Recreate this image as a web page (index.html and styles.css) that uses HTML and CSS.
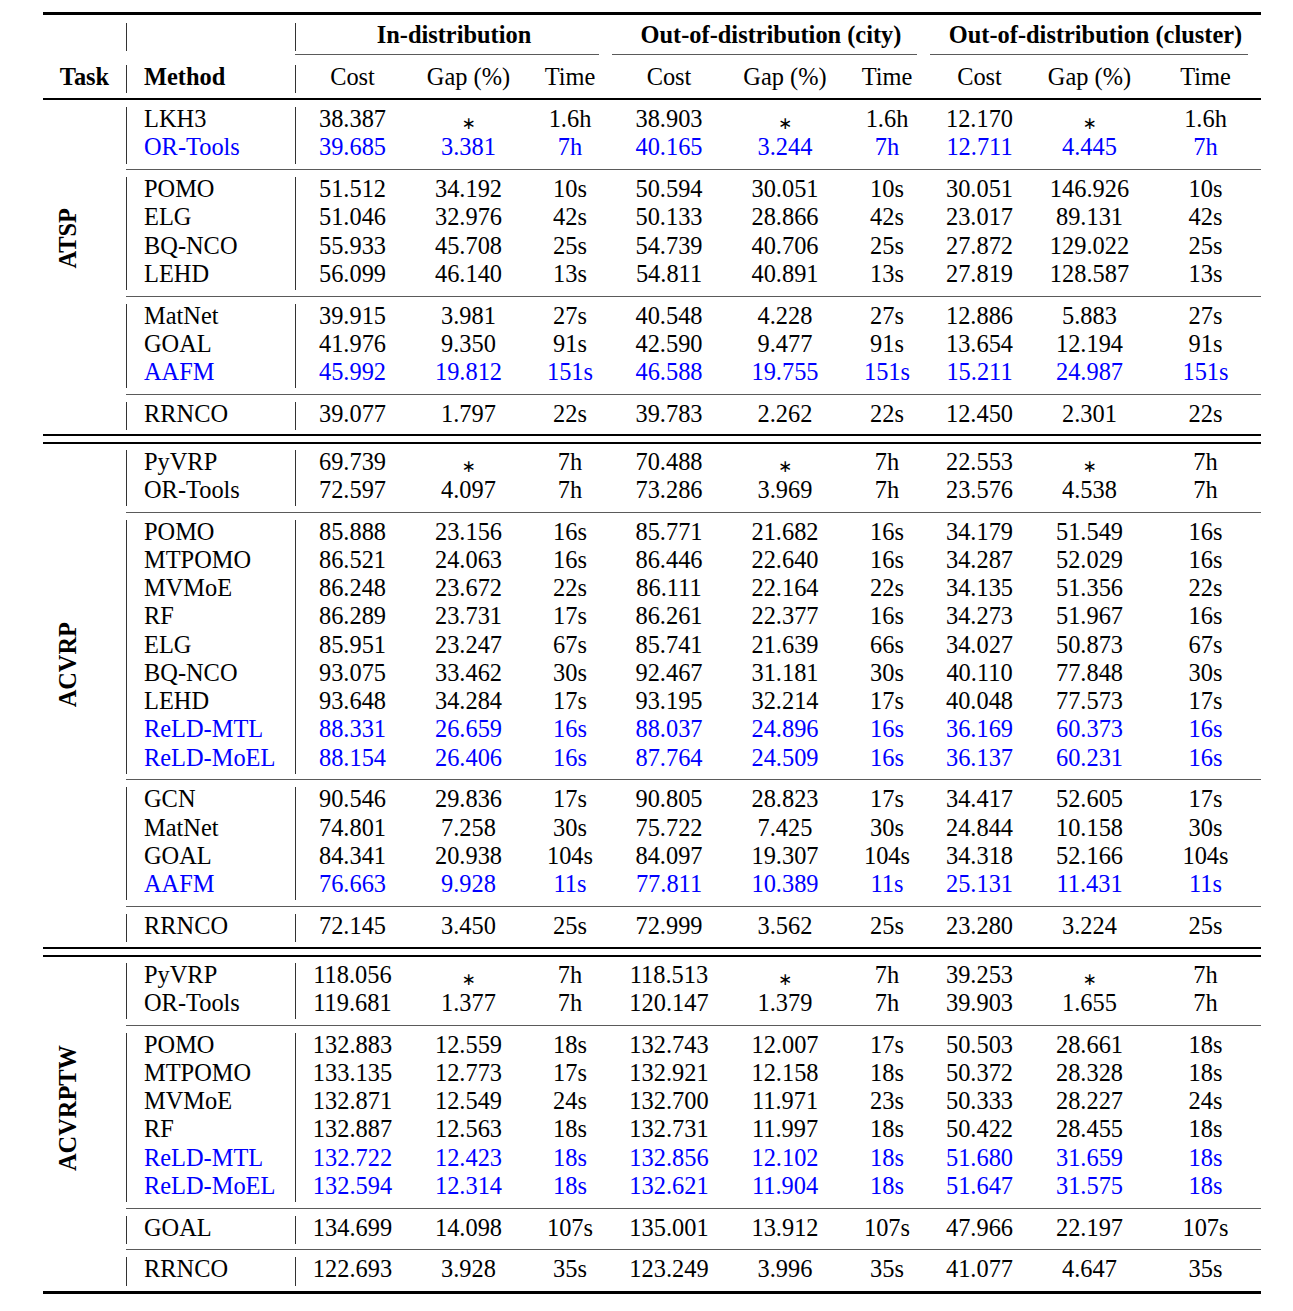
FILE: index.html
```html
<!DOCTYPE html>
<html>
<head>
<meta charset="utf-8">
<link rel="stylesheet" href="styles.css">
</head>
<body>
<div class="table">
  <div class="toprule"></div>
  <div class="hrow hrow1">
    <div class="c"></div>
    <div class="c"></div>
    <div class="c grp span3">In-distribution</div>
    <div class="c grp span3">Out-of-distribution (city)</div>
    <div class="c grp span3">Out-of-distribution (cluster)</div>
  </div>
  <div class="cmid">
    <div class="cm cm1"></div><div class="cm cm2"></div><div class="cm cm3"></div>
  </div>
  <div class="hrow hrow2">
    <div class="c b">Task</div>
    <div class="c m b">Method</div>
    <div class="c">Cost</div><div class="c">Gap (%)</div><div class="c">Time</div>
    <div class="c">Cost</div><div class="c">Gap (%)</div><div class="c">Time</div>
    <div class="c">Cost</div><div class="c">Gap (%)</div><div class="c">Time</div>
  </div>
  <div class="midrule"></div>

  <section class="sec sec-first">
    <div class="taskcol tc-atsp"><span class="tlabel">ATSP</span></div>
    <div class="rows">
      <div class="row"><div class="m">LKH3</div><div>38.387</div><div><span class="ast">∗</span></div><div>1.6h</div><div>38.903</div><div><span class="ast">∗</span></div><div>1.6h</div><div>12.170</div><div><span class="ast">∗</span></div><div>1.6h</div></div>
      <div class="row blue"><div class="m">OR-Tools</div><div>39.685</div><div>3.381</div><div>7h</div><div>40.165</div><div>3.244</div><div>7h</div><div>12.711</div><div>4.445</div><div>7h</div></div>
      <div class="rule"></div>
      <div class="row"><div class="m">POMO</div><div>51.512</div><div>34.192</div><div>10s</div><div>50.594</div><div>30.051</div><div>10s</div><div>30.051</div><div>146.926</div><div>10s</div></div>
      <div class="row"><div class="m">ELG</div><div>51.046</div><div>32.976</div><div>42s</div><div>50.133</div><div>28.866</div><div>42s</div><div>23.017</div><div>89.131</div><div>42s</div></div>
      <div class="row"><div class="m">BQ-NCO</div><div>55.933</div><div>45.708</div><div>25s</div><div>54.739</div><div>40.706</div><div>25s</div><div>27.872</div><div>129.022</div><div>25s</div></div>
      <div class="row"><div class="m">LEHD</div><div>56.099</div><div>46.140</div><div>13s</div><div>54.811</div><div>40.891</div><div>13s</div><div>27.819</div><div>128.587</div><div>13s</div></div>
      <div class="rule"></div>
      <div class="row"><div class="m">MatNet</div><div>39.915</div><div>3.981</div><div>27s</div><div>40.548</div><div>4.228</div><div>27s</div><div>12.886</div><div>5.883</div><div>27s</div></div>
      <div class="row"><div class="m">GOAL</div><div>41.976</div><div>9.350</div><div>91s</div><div>42.590</div><div>9.477</div><div>91s</div><div>13.654</div><div>12.194</div><div>91s</div></div>
      <div class="row blue"><div class="m">AAFM</div><div>45.992</div><div>19.812</div><div>151s</div><div>46.588</div><div>19.755</div><div>151s</div><div>15.211</div><div>24.987</div><div>151s</div></div>
      <div class="rule"></div>
      <div class="row"><div class="m">RRNCO</div><div>39.077</div><div>1.797</div><div>22s</div><div>39.783</div><div>2.262</div><div>22s</div><div>12.450</div><div>2.301</div><div>22s</div></div>
    </div>
  </section>

  <div class="drule"></div>

  <section class="sec">
    <div class="taskcol tc-acvrp"><span class="tlabel">ACVRP</span></div>
    <div class="rows">
      <div class="row"><div class="m">PyVRP</div><div>69.739</div><div><span class="ast">∗</span></div><div>7h</div><div>70.488</div><div><span class="ast">∗</span></div><div>7h</div><div>22.553</div><div><span class="ast">∗</span></div><div>7h</div></div>
      <div class="row"><div class="m">OR-Tools</div><div>72.597</div><div>4.097</div><div>7h</div><div>73.286</div><div>3.969</div><div>7h</div><div>23.576</div><div>4.538</div><div>7h</div></div>
      <div class="rule"></div>
      <div class="row"><div class="m">POMO</div><div>85.888</div><div>23.156</div><div>16s</div><div>85.771</div><div>21.682</div><div>16s</div><div>34.179</div><div>51.549</div><div>16s</div></div>
      <div class="row"><div class="m">MTPOMO</div><div>86.521</div><div>24.063</div><div>16s</div><div>86.446</div><div>22.640</div><div>16s</div><div>34.287</div><div>52.029</div><div>16s</div></div>
      <div class="row"><div class="m">MVMoE</div><div>86.248</div><div>23.672</div><div>22s</div><div>86.111</div><div>22.164</div><div>22s</div><div>34.135</div><div>51.356</div><div>22s</div></div>
      <div class="row"><div class="m">RF</div><div>86.289</div><div>23.731</div><div>17s</div><div>86.261</div><div>22.377</div><div>16s</div><div>34.273</div><div>51.967</div><div>16s</div></div>
      <div class="row"><div class="m">ELG</div><div>85.951</div><div>23.247</div><div>67s</div><div>85.741</div><div>21.639</div><div>66s</div><div>34.027</div><div>50.873</div><div>67s</div></div>
      <div class="row"><div class="m">BQ-NCO</div><div>93.075</div><div>33.462</div><div>30s</div><div>92.467</div><div>31.181</div><div>30s</div><div>40.110</div><div>77.848</div><div>30s</div></div>
      <div class="row"><div class="m">LEHD</div><div>93.648</div><div>34.284</div><div>17s</div><div>93.195</div><div>32.214</div><div>17s</div><div>40.048</div><div>77.573</div><div>17s</div></div>
      <div class="row blue"><div class="m">ReLD-MTL</div><div>88.331</div><div>26.659</div><div>16s</div><div>88.037</div><div>24.896</div><div>16s</div><div>36.169</div><div>60.373</div><div>16s</div></div>
      <div class="row blue"><div class="m">ReLD-MoEL</div><div>88.154</div><div>26.406</div><div>16s</div><div>87.764</div><div>24.509</div><div>16s</div><div>36.137</div><div>60.231</div><div>16s</div></div>
      <div class="rule"></div>
      <div class="row"><div class="m">GCN</div><div>90.546</div><div>29.836</div><div>17s</div><div>90.805</div><div>28.823</div><div>17s</div><div>34.417</div><div>52.605</div><div>17s</div></div>
      <div class="row"><div class="m">MatNet</div><div>74.801</div><div>7.258</div><div>30s</div><div>75.722</div><div>7.425</div><div>30s</div><div>24.844</div><div>10.158</div><div>30s</div></div>
      <div class="row"><div class="m">GOAL</div><div>84.341</div><div>20.938</div><div>104s</div><div>84.097</div><div>19.307</div><div>104s</div><div>34.318</div><div>52.166</div><div>104s</div></div>
      <div class="row blue"><div class="m">AAFM</div><div>76.663</div><div>9.928</div><div>11s</div><div>77.811</div><div>10.389</div><div>11s</div><div>25.131</div><div>11.431</div><div>11s</div></div>
      <div class="rule"></div>
      <div class="row"><div class="m">RRNCO</div><div>72.145</div><div>3.450</div><div>25s</div><div>72.999</div><div>3.562</div><div>25s</div><div>23.280</div><div>3.224</div><div>25s</div></div>
    </div>
  </section>

  <div class="drule"></div>

  <section class="sec sec-last">
    <div class="taskcol tc-acvrptw"><span class="tlabel">ACVRPTW</span></div>
    <div class="rows">
      <div class="row"><div class="m">PyVRP</div><div>118.056</div><div><span class="ast">∗</span></div><div>7h</div><div>118.513</div><div><span class="ast">∗</span></div><div>7h</div><div>39.253</div><div><span class="ast">∗</span></div><div>7h</div></div>
      <div class="row"><div class="m">OR-Tools</div><div>119.681</div><div>1.377</div><div>7h</div><div>120.147</div><div>1.379</div><div>7h</div><div>39.903</div><div>1.655</div><div>7h</div></div>
      <div class="rule"></div>
      <div class="row"><div class="m">POMO</div><div>132.883</div><div>12.559</div><div>18s</div><div>132.743</div><div>12.007</div><div>17s</div><div>50.503</div><div>28.661</div><div>18s</div></div>
      <div class="row"><div class="m">MTPOMO</div><div>133.135</div><div>12.773</div><div>17s</div><div>132.921</div><div>12.158</div><div>18s</div><div>50.372</div><div>28.328</div><div>18s</div></div>
      <div class="row"><div class="m">MVMoE</div><div>132.871</div><div>12.549</div><div>24s</div><div>132.700</div><div>11.971</div><div>23s</div><div>50.333</div><div>28.227</div><div>24s</div></div>
      <div class="row"><div class="m">RF</div><div>132.887</div><div>12.563</div><div>18s</div><div>132.731</div><div>11.997</div><div>18s</div><div>50.422</div><div>28.455</div><div>18s</div></div>
      <div class="row blue"><div class="m">ReLD-MTL</div><div>132.722</div><div>12.423</div><div>18s</div><div>132.856</div><div>12.102</div><div>18s</div><div>51.680</div><div>31.659</div><div>18s</div></div>
      <div class="row blue"><div class="m">ReLD-MoEL</div><div>132.594</div><div>12.314</div><div>18s</div><div>132.621</div><div>11.904</div><div>18s</div><div>51.647</div><div>31.575</div><div>18s</div></div>
      <div class="rule"></div>
      <div class="row"><div class="m">GOAL</div><div>134.699</div><div>14.098</div><div>107s</div><div>135.001</div><div>13.912</div><div>107s</div><div>47.966</div><div>22.197</div><div>107s</div></div>
      <div class="rule"></div>
      <div class="row"><div class="m">RRNCO</div><div>122.693</div><div>3.928</div><div>35s</div><div>123.249</div><div>3.996</div><div>35s</div><div>41.077</div><div>4.647</div><div>35s</div></div>
    </div>
  </section>

  <div class="bottomrule"></div>
</div>
</body>
</html>
```

FILE: styles.css
```css
html, body {
  margin: 0;
  padding: 0;
  background: #fff;
}

body {
  font-family: "Liberation Serif", "Times New Roman", serif;
  font-size: 24.4px;
  color: #000;
}

.table {
  width: 1218px;
  margin: 12px 0 0 43px;
}

.toprule {
  height: 3px;
  background: #000;
}

.hrow {
  display: grid;
  grid-template-columns: 83px 169px 114px 119px 84px 114px 118px 86px 99px 121px 111px;
  line-height: 24.5px;
}

.hrow1 {
  margin-top: 8px;
  height: 28px;
}

.hrow2 {
  height: 28.25px;
}

.hrow > :nth-child(2),
.hrow > :nth-child(3) {
  border-left: 1px solid #333;
}

.c {
  text-align: center;
  white-space: nowrap;
}

.c.m {
  text-align: left;
  padding-left: 17px;
}

.b,
.grp {
  font-weight: bold;
}

.span3 {
  grid-column: span 3;
}

.cmid {
  display: grid;
  grid-template-columns: 83px 169px 114px 119px 84px 114px 118px 86px 99px 121px 111px;
  padding: 3px 0 9.5px;
}

.cm {
  height: 1px;
  background: #5a5a5a;
  margin-right: 13px;
}

.cm1 { grid-column: 3 / 6; }
.cm2 { grid-column: 6 / 9; }
.cm3 { grid-column: 9 / 12; }

.midrule {
  margin-top: 5.3px;
  height: 2px;
  background: #000;
}

.sec {
  display: flex;
  padding: 6px 0 4.5px;
}

.sec-first {
  padding-top: 7px;
  padding-bottom: 3.5px;
}

.sec-last {
  padding-bottom: 5.5px;
}

.taskcol {
  width: 83px;
  flex: none;
  display: flex;
  flex-direction: column;
  align-items: flex-start;
  padding-left: 13px;
  box-sizing: border-box;
}

.tc-atsp { padding-top: 101px; }
.tc-acvrp { padding-top: 172px; }
.tc-acvrptw { padding-top: 82px; }

.tlabel {
  display: block;
  writing-mode: vertical-rl;
  transform: rotate(180deg);
  font-weight: bold;
  line-height: 24px;
  white-space: nowrap;
}

.rows {
  flex: 1;
}

.row {
  display: grid;
  grid-template-columns: 169px 114px 119px 84px 114px 118px 86px 99px 121px 111px;
  height: 28.25px;
  line-height: 24.5px;
}

.row > div {
  text-align: center;
  white-space: nowrap;
}

.row > :first-child,
.row > :nth-child(2) {
  border-left: 1px solid #333;
}

.row > .m {
  text-align: left;
  padding-left: 17px;
}

.row.blue {
  color: #0000ff;
}

.ast {
  font-family: "DejaVu Sans", sans-serif;
  font-size: 17px;
  position: relative;
  top: 2px;
}

.rule {
  height: 1px;
  background: #5a5a5a;
  margin: 5.5px 0 7px;
}

.drule {
  height: 6px;
  border-top: 2px solid #000;
  border-bottom: 2px solid #000;
}

.bottomrule {
  height: 3px;
  background: #000;
}
```
